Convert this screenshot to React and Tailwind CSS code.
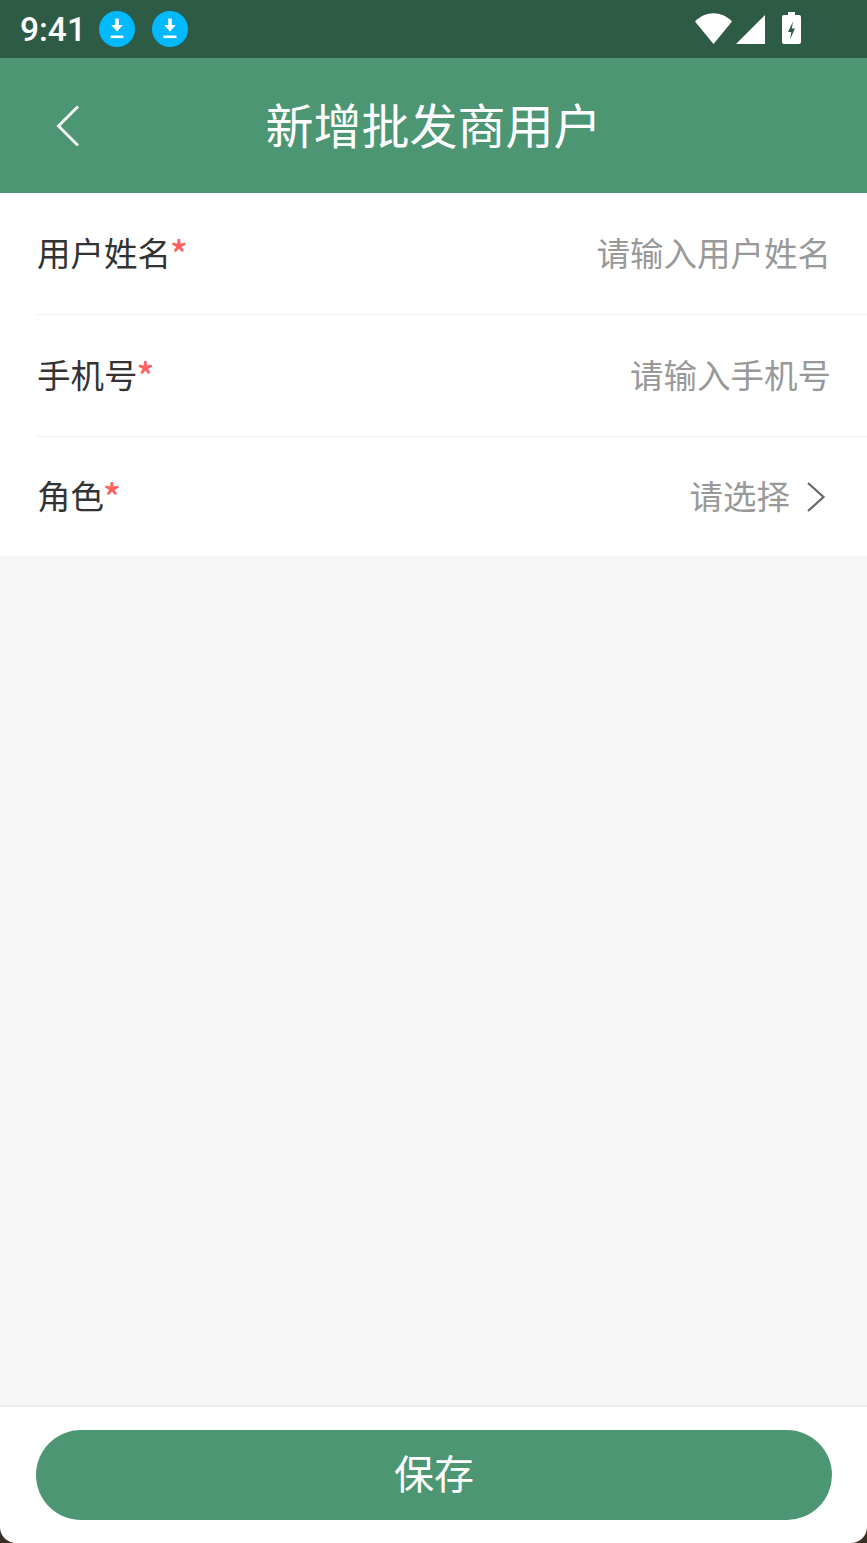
const font = { fontFamily: '"Noto Sans CJK SC", sans-serif' };

function DownloadBadge() {
  return (
    <svg width="36" height="36" viewBox="0 0 36 36" className="block">
      <circle cx="18" cy="18" r="18" fill="#00b9ff" />
      <path d="M16.200 7.500h3.600v6.500h4L18 20.500l-5.800-6.500h4Z" fill="#fff" />
      <rect x="11.500" y="24.500" width="13" height="2.600" fill="#fff" />
    </svg>
  );
}

function Row({ label, placeholder, border, chevron, h }) {
  return (
    <div className={`flex pl-[37px] bg-white ${h}`}>
      <div className={`flex flex-1 items-center justify-between pr-[36px] pb-[3px] ${border ? "border-b border-[#f0f0f0]" : ""}`}>
        <div className="text-[33.500px] leading-none text-[#333333] flex items-center">
          <span>{label}</span>
          <span className="text-[#ff6060] font-medium text-[37px] leading-none ml-[-1px] mt-[2px]">*</span>
        </div>
        <div className="flex items-center">
          <span className="text-[33.500px] leading-none text-[#999999]">{placeholder}</span>
          {chevron && (
            <svg width="20" height="32" viewBox="0 0 20 32" className="ml-[16px] mr-[5px] mt-[3px]">
              <path d="M2 2l15.500 14L2 30" stroke="#666666" strokeWidth="2.200" fill="none" />
            </svg>
          )}
        </div>
      </div>
    </div>
  );
}

export default function App() {
  return (
    <div className="w-[867px] h-[1543px] flex flex-col bg-[#3a2f25] overflow-hidden" style={font}>
      <div className="h-[58px] bg-[#2e5b46] flex items-center pl-[20px] pr-[66px] shrink-0">
        <span className="text-white text-[33.500px] leading-none w-[79px] mt-[1px]" style={{ fontFamily: 'Roboto, sans-serif', fontWeight: 500 }}>9:41</span>
        <div className="flex gap-[17px]">
          <DownloadBadge />
          <DownloadBadge />
        </div>
        <div className="flex-1" />
        <svg width="37" height="31" viewBox="0 0 37 31" className="mt-[-1px]">
          <path d="M0 8.500C10.500-2.500 26.500-2.500 37 8.500L18.500 31Z" fill="#fff" />
        </svg>
        <svg width="30" height="30" viewBox="0 0 30 30" className="ml-[3px]">
          <path d="M30 1V30H1Z" fill="#fff" />
        </svg>
        <svg width="19" height="32" viewBox="0 0 19 32" className="ml-[17px] mt-[-2px]">
          <path d="M6 0h7v3h4a2 2 0 0 1 2 2v25a2 2 0 0 1-2 2H2a2 2 0 0 1-2-2V5a2 2 0 0 1 2-2h4Z" fill="#fff" />
          <path d="M11 9.500L6 20h3.300l-1.300 7.500L13 16.500H9.800Z" fill="#2e5b46" />
        </svg>
      </div>
      <div className="h-[135px] bg-[#4c9674] relative flex items-center justify-center shrink-0 pb-[5px]">
        <svg width="26" height="42" viewBox="0 0 26 42" className="absolute left-[56px] top-[47px]">
          <path d="M22 1.500L2.500 21 22 40.500" stroke="#f2f7f4" strokeWidth="3" fill="none" />
        </svg>
        <span className="text-white text-[48px] leading-none">新增批发商用户</span>
      </div>
      <Row label="用户姓名" placeholder="请输入用户姓名" border h="h-[122px]" />
      <Row label="手机号" placeholder="请输入手机号" border h="h-[122px]" />
      <Row label="角色" placeholder="请选择" chevron h="h-[119px]" />
      <div className="flex-1 bg-[#f7f7f7]" />
      <div className="h-[138px] bg-white border-t-2 border-[#eeeeee] rounded-b-[16px] pt-[23px] pl-[36px] pr-[35px] shrink-0">
        <div className="h-[90px] rounded-full bg-[#4c9674] flex items-center justify-center pb-[7px]">
          <span className="text-white text-[40px] leading-none">保存</span>
        </div>
      </div>
    </div>
  );
}
